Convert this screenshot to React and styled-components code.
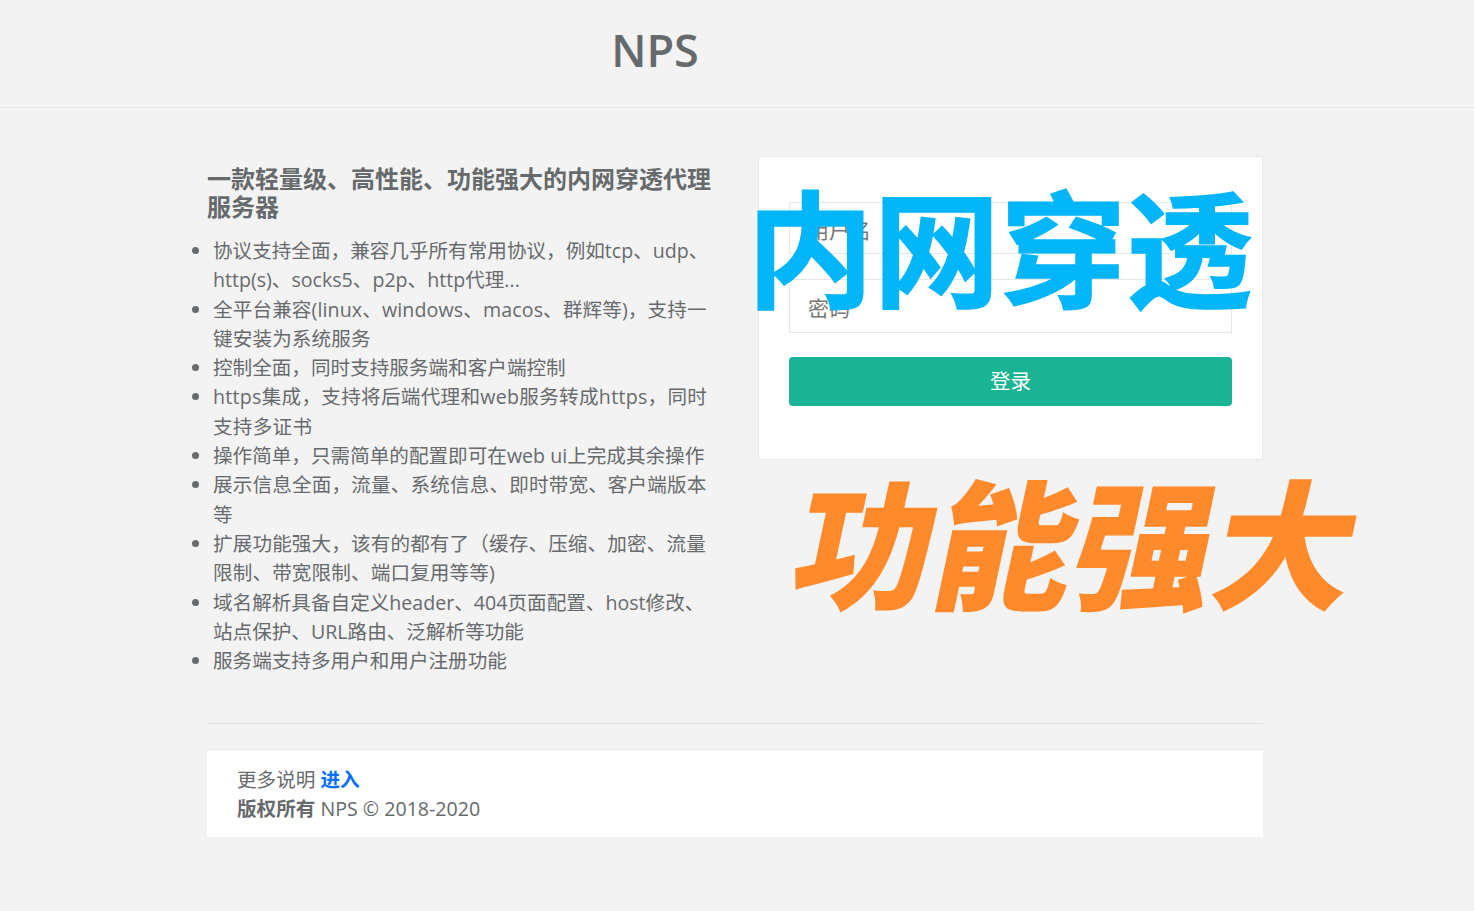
import React from 'react';
import styled, { createGlobalStyle } from 'styled-components';

const GlobalStyle = createGlobalStyle`
  html, body {
    margin: 0;
    padding: 0;
    background: #f3f3f4;
  }
  body {
    font-family: "Open Sans", "Noto Sans CJK SC", sans-serif;
    font-size: 19.6px;
    line-height: 29.29px;
    color: #676a6c;
  }
`;

const Page = styled.div`
  position: relative;
  width: 1474px;
  height: 911px;
  overflow: hidden;
`;

const Header = styled.header`
  height: 107px;
  border-bottom: 1px solid #e7eaec;
  box-sizing: content-box;
`;

const Logo = styled.h1`
  width: 1310px;
  margin: 0;
  padding-top: 21px;
  text-align: center;
  font-size: 45px;
  line-height: 58px;
  font-weight: 600;
  color: #676a6c;
`;

const Main = styled.main`
  width: 1056px;
  margin: 0 0 0 207px;
  padding-top: 48px;
`;

const Row = styled.div`
  display: flex;
  justify-content: space-between;
  align-items: flex-start;
`;

const Intro = styled.section`
  width: 510px;
  padding-top: 9px;
`;

const Heading = styled.h3`
  margin: 0 0 15px;
  font-size: 24px;
  line-height: 28px;
  font-weight: 700;
`;

const Features = styled.ul`
  margin: 0;
  padding: 0 0 0 6px;
`;

const Feature = styled.li`
  letter-spacing: ${props => props.$tracking || 0}px;
`;

const LoginPanel = styled.section`
  position: relative;
  width: 505px;
  height: 304px;
  box-sizing: border-box;
  padding: 45px 30px 0;
  background: #fff;
  border: 1px solid #e7eaec;
`;

const Field = styled.input`
  display: block;
  width: 100%;
  height: ${props => props.$height}px;
  margin-bottom: ${props => props.$gap}px;
  padding: 4px 18px 0;
  box-sizing: border-box;
  border: 1px solid #e5e6e7;
  background: #fff;
  font: inherit;
  font-size: 21px;
  color: #676a6c;
  outline: none;
  &::placeholder {
    color: #757575;
    opacity: 1;
  }
`;

const SubmitButton = styled.button`
  display: block;
  width: 100%;
  height: 49px;
  padding: 1px 0 0;
  border: 0;
  border-radius: 4px;
  background: #1ab394;
  color: #fff;
  font: inherit;
  font-size: 20.5px;
`;

const Divider = styled.hr`
  margin: 48px 0 25px;
  border: 0;
  border-top: 1px solid #dcdddd;
`;

const Footer = styled.footer`
  height: 88px;
  box-sizing: border-box;
  padding: 15px 30px;
  background: #fff;
  border-top: 1px solid #e7eaec;
  line-height: 29px;
`;

const MoreLink = styled.a`
  color: #0a6eff;
  font-weight: 700;
  text-decoration: none;
`;

// the two big slogans lie over the page and the login panel
const Slogan = styled.div`
  position: absolute;
  font-family: "Noto Sans CJK SC", sans-serif;
  white-space: nowrap;
  user-select: none;
`;

const SloganBlue = styled(Slogan)`
  left: 747px;
  top: 149px;
  font-size: 126.5px;
  font-weight: 700;
  line-height: 188px;
  color: #03b5f9;
  -webkit-text-stroke: 1.5px #03b5f9;
`;

const SloganOrange = styled(Slogan)`
  left: 799px;
  top: 443px;
  font-size: 140px;
  font-weight: 900;
  line-height: 190px;
  color: #ff8a2b;
  transform: skewX(-12deg);
`;

const features = [
  { text: '协议支持全面，兼容几乎所有常用协议，例如tcp、udp、http(s)、socks5、p2p、http代理...' },
  { text: '全平台兼容(linux、windows、macos、群辉等)，支持一键安装为系统服务', tracking: 0.12 },
  { text: '控制全面，同时支持服务端和客户端控制' },
  { text: 'https集成，支持将后端代理和web服务转成https，同时支持多证书', tracking: 0.28 },
  { text: '操作简单，只需简单的配置即可在web ui上完成其余操作' },
  { text: '展示信息全面，流量、系统信息、即时带宽、客户端版本等', tracking: 0.15 },
  { text: '扩展功能强大，该有的都有了（缓存、压缩、加密、流量限制、带宽限制、端口复用等等)', tracking: 0.12 },
  { text: '域名解析具备自定义header、404页面配置、host修改、站点保护、URL路由、泛解析等功能' },
  { text: '服务端支持多用户和用户注册功能' }
];

const App = () => (
  <Page>
    <GlobalStyle />
    <Header>
      <Logo>NPS</Logo>
    </Header>
    <Main>
      <Row>
        <Intro>
          <Heading>一款轻量级、高性能、功能强大的内网穿透代理服务器</Heading>
          <Features>
            {features.map(item => (
              <Feature key={item.text} $tracking={item.tracking}>
                {item.text}
              </Feature>
            ))}
          </Features>
        </Intro>
        <LoginPanel>
          <form>
            <Field placeholder="用户名" $height={52} $gap={25} />
            <Field placeholder="密码" type="password" $height={54} $gap={24} />
            <SubmitButton type="button">登录</SubmitButton>
          </form>
        </LoginPanel>
      </Row>
      <Divider />
      <Footer>
        <div>
          更多说明 <MoreLink href="#">进入</MoreLink>
        </div>
        <div>
          <strong>版权所有</strong> NPS © 2018-2020
        </div>
      </Footer>
    </Main>
    <SloganBlue>内网穿透</SloganBlue>
    <SloganOrange>功能强大</SloganOrange>
  </Page>
);

export default App;
